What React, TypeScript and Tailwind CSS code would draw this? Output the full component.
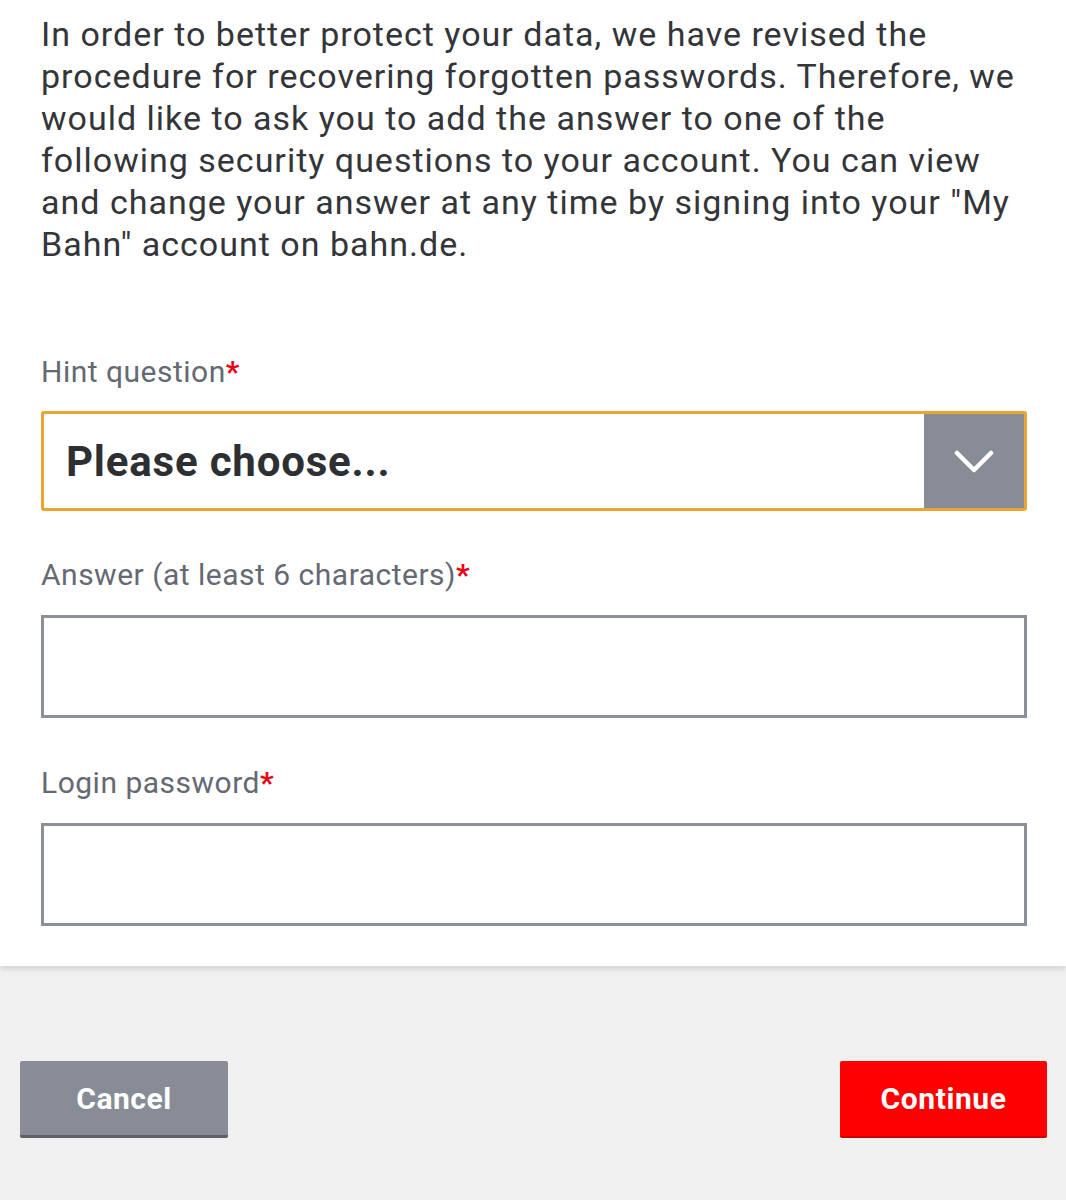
function FieldLabel({ text }: { text: string }) {
  return (
    <label className="block text-[30px] leading-[36px] tracking-[0.5px] text-[#646973]">
      {text}
      <span className="text-[#ec0016] font-bold">*</span>
    </label>
  );
}

export default function App() {
  return (
    <div className="w-[1066px] h-[1200px] flex flex-col bg-[#f0f0f0] font-['Roboto',sans-serif]">
      {/* Form */}
      <div className="bg-white pl-[41px] pr-[39px] pt-[13px] pb-[40px] shadow-[0_3px_5px_rgba(0,0,0,0.12)] relative z-10">
        <p className="text-[34px] leading-[42px] tracking-[1px] text-[#333539]">
          In order to better protect your data, we have revised the procedure for recovering forgotten passwords.
          Therefore, we would like to ask you to add the answer to one of the following security questions to your
          account. You can view and change your answer at any time by signing into your "My Bahn" account on
          bahn.de.
        </p>

        <div className="mt-[89px]">
          <FieldLabel text="Hint question" />
          <div className="mt-[21px] h-[100px] flex border-[3px] border-[#e8a531] rounded-[3px] overflow-hidden">
            <div className="flex-1 flex items-center pl-[22px] text-[42px] tracking-[0.8px] font-bold text-[#2d2f33]">
              Please choose...
            </div>
            <div className="w-[100px] bg-[#878c96] flex items-center justify-center">
              <svg width="40" height="24" viewBox="0 0 40 24" fill="none">
                <polyline
                  points="3,4 20,21 37,4"
                  stroke="white"
                  strokeWidth="4.5"
                  strokeLinecap="round"
                  strokeLinejoin="round"
                />
              </svg>
            </div>
          </div>
        </div>

        <div className="mt-[46px]">
          <FieldLabel text="Answer (at least 6 characters)" />
          <div className="mt-[22px] h-[103px] border-[3px] border-[#8c9099] bg-white" />
        </div>

        <div className="mt-[47px]">
          <FieldLabel text="Login password" />
          <div className="mt-[22px] h-[103px] border-[3px] border-[#8c9099] bg-white" />
        </div>
      </div>

      {/* Actions */}
      <div className="flex-1 flex justify-between items-start pl-[20px] pr-[19px] pt-[95px]">
        <button className="w-[208px] h-[77px] bg-[#878c96] border-b-[3px] border-[#5d6069] rounded-[2px] text-white text-[30px] tracking-[0.5px] font-bold">
          Cancel
        </button>
        <button className="w-[207px] h-[77px] bg-[#ff0000] border-b-[2px] border-[#cc0000] rounded-[2px] text-white text-[30px] tracking-[0.6px] font-bold">
          Continue
        </button>
      </div>
    </div>
  );
}
